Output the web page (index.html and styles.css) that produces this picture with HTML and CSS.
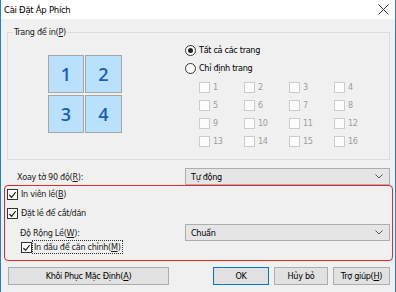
FILE: index.html
```html
<!DOCTYPE html>
<html lang="vi">
<head>
  <meta charset="UTF-8">
  <title>Cài Đặt Áp Phích</title>
  <link rel="stylesheet" href="styles.css">
</head>
<body>
  <div class="window">
    <div class="titlebar">
      <span class="title">Cài Đặt Áp Phích</span>
      <svg class="close" width="11" height="11" viewBox="0 0 11 11"><path d="M0.5 0.5L10.5 10.5M10.5 0.5L0.5 10.5"/></svg>
    </div>
    <div class="content">
      <fieldset class="group">
        <legend>Trang để in(<u>P</u>)</legend>
        <div class="group-inner">
          <div class="preview">
            <div class="tiles">
              <div class="tile">1</div>
              <div class="tile">2</div>
              <div class="tile">3</div>
              <div class="tile">4</div>
            </div>
          </div>
          <div class="pages">
            <label class="radio checked"><span class="dot"></span>Tất cả các trang</label>
            <label class="radio"><span class="dot"></span>Chỉ định trang</label>
            <div class="page-grid">
              <label class="cb disabled"><span class="box"></span>1</label>
              <label class="cb disabled"><span class="box"></span>2</label>
              <label class="cb disabled"><span class="box"></span>3</label>
              <label class="cb disabled"><span class="box"></span>4</label>
              <label class="cb disabled"><span class="box"></span>5</label>
              <label class="cb disabled"><span class="box"></span>6</label>
              <label class="cb disabled"><span class="box"></span>7</label>
              <label class="cb disabled"><span class="box"></span>8</label>
              <label class="cb disabled"><span class="box"></span>9</label>
              <label class="cb disabled"><span class="box"></span>10</label>
              <label class="cb disabled"><span class="box"></span>11</label>
              <label class="cb disabled"><span class="box"></span>12</label>
              <label class="cb disabled"><span class="box"></span>13</label>
              <label class="cb disabled"><span class="box"></span>14</label>
              <label class="cb disabled"><span class="box"></span>15</label>
              <label class="cb disabled"><span class="box"></span>16</label>
            </div>
          </div>
        </div>
      </fieldset>

      <div class="field rotate">
        <span class="field-label">Xoay tờ 90 độ(<u>R</u>):</span>
        <div class="select">Tự động<svg width="8" height="5" viewBox="0 0 8 5"><path d="M0.5 0.5L4 4L7.5 0.5"/></svg></div>
      </div>

      <div class="margins">
        <label class="cb checked row-1"><span class="box"><svg width="10" height="10" viewBox="0 0 10 10"><path d="M1.5 5L4 7.5L8.5 1.8"/></svg></span>In viên lề(<u>B</u>)</label>
        <label class="cb checked row-2"><span class="box"><svg width="10" height="10" viewBox="0 0 10 10"><path d="M1.5 5L4 7.5L8.5 1.8"/></svg></span>Đặt lề để cắt/dán</label>
        <div class="field width-row">
          <span class="field-label">Độ Rộng Lề(<u>W</u>):</span>
          <div class="select">Chuẩn<svg width="8" height="5" viewBox="0 0 8 5"><path d="M0.5 0.5L4 4L7.5 0.5"/></svg></div>
        </div>
        <label class="cb checked row-4"><span class="box"><svg width="10" height="10" viewBox="0 0 10 10"><path d="M1.5 5L4 7.5L8.5 1.8"/></svg></span><span class="focus">In dấu để căn chỉnh(<u>M</u>)</span></label>
      </div>

      <div class="buttons">
        <button class="btn reset">Khôi Phục Mặc Định(<u>A</u>)</button>
        <button class="btn ok">OK</button>
        <button class="btn cancel">Hủy bỏ</button>
        <button class="btn help">Trợ giúp(<u>H</u>)</button>
      </div>
    </div>
  </div>
</body>
</html>
```

FILE: styles.css
```css
body {
  margin: 0;
  font-family: "DejaVu Sans Condensed", "Liberation Sans", sans-serif;
  font-size: 9px;
  letter-spacing: -0.3px;
  color: #1a1a1a;
  background: #f0f0f0;
}
u {
  text-decoration: underline;
  text-underline-offset: 1px;
}
.window {
  width: 396px;
  height: 292px;
  box-sizing: border-box;
  border: 1px solid #1883d7;
  border-top: none;
  border-bottom: none;
  background: #f0f0f0;
  overflow: hidden;
}
.titlebar {
  height: 19px;
  background: #fff;
  display: flex;
  align-items: center;
  justify-content: space-between;
  padding: 0 6px 0 3px;
}
.title {
  font-size: 9.5px;
  color: #000;
}
.close path {
  stroke: #333;
  stroke-width: 1;
  fill: none;
}
.content {
  padding-top: 7px;
}

/* group box */
.group {
  margin: 0 5px 0 6px;
  padding: 0;
  border: 1px solid #dcdcdc;
  min-width: 0;
}
.group legend {
  margin-left: 5px;
  padding: 0 1px;
  line-height: 12px;
}
.group-inner {
  display: flex;
  padding-bottom: 9px;
}
.preview {
  width: 137px;
  padding: 17px 0 0 40px;
}
.tiles {
  display: grid;
  grid-template-columns: 36px 37px;
  grid-template-rows: 38px 38px;
  gap: 2px 1px;
}
.tile {
  background: #b9e1fd;
  border: 1px solid #a5a5a5;
  display: flex;
  align-items: center;
  justify-content: center;
  font-family: "Open Sans", "Noto Sans", sans-serif;
  font-weight: 600;
  font-size: 18px;
  letter-spacing: 0;
  color: #1a5dc2;
}
.pages {
  padding-top: 3px;
}
.radio {
  display: flex;
  align-items: center;
  height: 18px;
  color: #000;
}
.radio .dot {
  width: 9px;
  height: 9px;
  border: 1px solid #333;
  border-radius: 50%;
  background: #fff;
  margin-right: 3px;
  display: flex;
  align-items: center;
  justify-content: center;
}
.radio.checked .dot::after {
  content: "";
  width: 5px;
  height: 5px;
  border-radius: 50%;
  background: #222;
}
.page-grid {
  display: grid;
  grid-template-columns: repeat(4, 45px);
  grid-auto-rows: 18px;
  margin: 1px 0 0 14px;
}
.cb {
  display: flex;
  align-items: center;
}
.cb .box {
  width: 9px;
  height: 9px;
  border: 1px solid #333;
  background: #fff;
  margin-right: 3px;
  display: flex;
  flex-shrink: 0;
}
.cb.disabled {
  color: #9d9d9d;
}
.cb.disabled .box {
  border-color: #cccccc;
  background: #fcfcfc;
}
.cb .box path {
  fill: none;
  stroke: #222;
  stroke-width: 1.3;
}

/* dropdown rows */
.field {
  display: flex;
  align-items: center;
  height: 17px;
}
.rotate {
  margin-top: 8px;
  padding-left: 16px;
}
.rotate .field-label {
  width: 168px;
}
.select {
  width: 205px;
  height: 17px;
  box-sizing: border-box;
  border: 1px solid #adadad;
  background: #e5e5e5;
  display: flex;
  align-items: center;
  justify-content: space-between;
  padding: 0 6px 0 5px;
  color: #000;
}
.select path {
  fill: none;
  stroke: #555;
  stroke-width: 1;
}

/* highlighted margin settings */
.margins {
  margin: 0 2px 0 3px;
  border: 1px solid #e1262d;
  border-radius: 4px;
  padding: 1px 0 6px 2px;
}
.margins .cb {
  height: 14px;
}
.row-2 {
  margin-top: 5px;
}
.width-row {
  margin-top: 4px;
  padding-left: 13px;
}
.width-row .field-label {
  width: 165px;
}
.row-4 {
  margin: -1px 0 0 14px;
}
.row-4 .box {
  margin-right: 1px;
}
.focus {
  outline: 1px dotted #333;
  outline-offset: 0;
  padding: 0 1px;
  line-height: 12px;
}

/* buttons */
.buttons {
  display: flex;
  gap: 5px;
  margin: 6px 5px 0 7px;
}
.btn {
  height: 18px;
  box-sizing: border-box;
  border: 1px solid #adadad;
  background: #e1e1e1;
  font: inherit;
  letter-spacing: inherit;
  color: #000;
  padding: 0;
}
.reset {
  width: 161px;
  margin-right: auto;
}
.ok {
  width: 56px;
  border-color: #0078d7;
}
.cancel {
  width: 54px;
}
.help {
  width: 57px;
}
```
